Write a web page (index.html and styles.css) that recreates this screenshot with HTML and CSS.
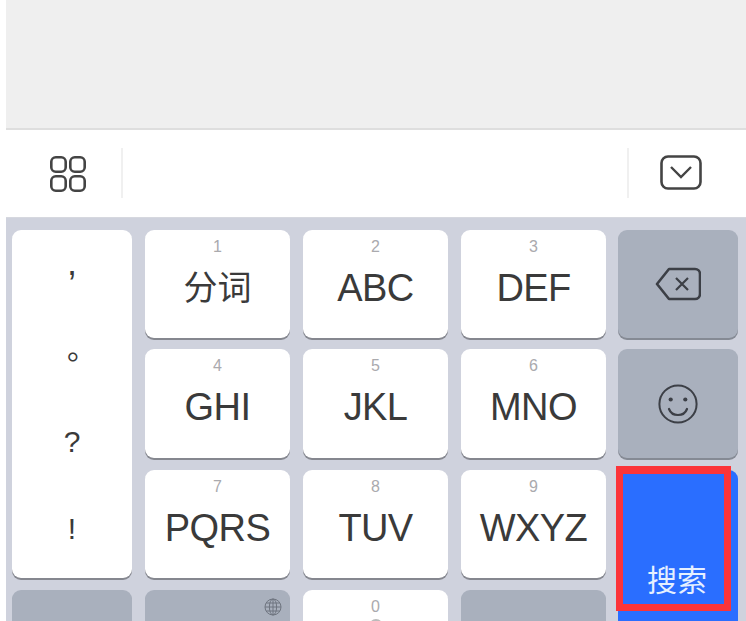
FILE: index.html
```html
<!DOCTYPE html>
<html lang="zh">
<head>
<meta charset="utf-8">
<title>键盘</title>
<link rel="stylesheet" href="styles.css">
</head>
<body>
<main class="screen">
  <div class="blank"></div>
  <div class="toolbar">
    <div class="tool tool-left">
      <svg class="icon" width="38" height="38" viewBox="0 0 38 38" aria-hidden="true">
        <g fill="none" stroke="#444" stroke-width="2.6">
          <rect x="2.3" y="2.3" width="14.4" height="14.4" rx="4.5"/>
          <rect x="21.3" y="2.3" width="14.4" height="14.4" rx="4.5"/>
          <rect x="2.3" y="21.3" width="14.4" height="14.4" rx="4.5"/>
          <rect x="21.3" y="21.3" width="14.4" height="14.4" rx="4.5"/>
        </g>
      </svg>
    </div>
    <div class="divider"></div>
    <div class="tool-fill"></div>
    <div class="divider"></div>
    <div class="tool tool-right">
      <svg class="icon" width="42" height="35" viewBox="0 0 42 35" aria-hidden="true">
        <rect x="1.5" y="1.5" width="39" height="32" rx="6.5" fill="none" stroke="#444" stroke-width="2.6"/>
        <path d="M11 12 L21 22 L31 12" fill="none" stroke="#444" stroke-width="2.4"/>
      </svg>
    </div>
  </div>
  <div class="keyboard">
    <div class="key punct">
      <span class="p-comma">,</span><span class="p-stop">。</span><span class="p-mark">?</span><span class="p-mark">!</span>
    </div>
    <div class="key"><small>1</small><b class="cjk">分词</b></div>
    <div class="key"><small>2</small><b>ABC</b></div>
    <div class="key"><small>3</small><b>DEF</b></div>
    <div class="key dark tail">
      <svg width="46" height="34" viewBox="0 0 46 34" aria-hidden="true">
        <path d="M14 2 H40 A5 5 0 0 1 45 7 V27 A5 5 0 0 1 40 32 H14 L2 17 Z" fill="none" stroke="#3c3f46" stroke-width="2.6" stroke-linejoin="round"/>
        <path d="M21 11 L33 23 M33 11 L21 23" stroke="#3c3f46" stroke-width="2.2" fill="none"/>
      </svg>
    </div>
    <div class="key r2"><small>4</small><b>GHI</b></div>
    <div class="key r2"><small>5</small><b>JKL</b></div>
    <div class="key r2"><small>6</small><b>MNO</b></div>
    <div class="key dark tail r2">
      <svg width="40" height="40" viewBox="0 0 40 40" aria-hidden="true">
        <circle cx="20" cy="20" r="18.6" fill="none" stroke="#3c3f46" stroke-width="2"/>
        <circle cx="12.7" cy="15.5" r="2.1" fill="#3c3f46"/>
        <circle cx="27.3" cy="15.5" r="2.1" fill="#3c3f46"/>
        <path d="M11 25 C14 33 26 33 29 25" fill="none" stroke="#3c3f46" stroke-width="2.2" stroke-linecap="round"/>
      </svg>
    </div>
    <div class="key"><small>7</small><b>PQRS</b></div>
    <div class="key"><small>8</small><b>TUV</b></div>
    <div class="key"><small>9</small><b>WXYZ</b></div>
    <div class="key search tail"><span>搜索</span></div>
    <div class="key dark"></div>
    <div class="key dark globe-key">
      <svg class="globe" width="18" height="18" viewBox="0 0 18 18" aria-hidden="true">
        <g fill="none" stroke="#6f7580" stroke-width="1">
          <circle cx="9" cy="9" r="8"/>
          <ellipse cx="9" cy="9" rx="3.6" ry="8"/>
          <path d="M9 1 V17 M1 9 H17 M2.2 5 H15.8 M2.2 13 H15.8"/>
        </g>
      </svg>
    </div>
    <div class="key"><small>0</small><i class="space"></i></div>
    <div class="key dark"></div>
  </div>
  <div class="highlight"></div>
</main>
</body>
</html>
```

FILE: styles.css
```css
* { box-sizing: border-box; }
html, body { margin: 0; height: 100%; background: #fff; }
body { overflow: hidden; }
.screen {
  position: relative;
  width: 746px;
  height: 621px;
  padding-left: 6px;
  overflow: hidden;
  font-family: "Liberation Sans", "Noto Sans CJK SC", sans-serif;
}
.blank {
  height: 130px;
  background: #efefef;
  border-bottom: 2px solid #dedede;
}
.toolbar {
  display: flex;
  align-items: center;
  height: 87px;
  background: #fff;
}
.tool { display: flex; justify-content: center; align-items: center; }
.tool-left { width: 115px; padding-left: 8px; }
.tool-right { width: 103px; margin-top: -2px; }
.tool-fill { flex: 0 0 504px; }
.divider { width: 2px; height: 50px; background: #f0f0f0; margin-top: -1px; }
.icon { display: block; }
.keyboard {
  display: grid;
  grid-template-columns: 120px 145px 145px 145px 120px;
  grid-auto-rows: 108px;
  column-gap: 13px;
  row-gap: 12px;
  height: 404px;
  padding: 12px 0 0 6px;
  background: #cfd2dd;
  border-top: 1px solid #d6d8df;
}
.key {
  position: relative;
  display: flex;
  flex-direction: column;
  align-items: center;
  background: #fff;
  border-radius: 9px;
  box-shadow: 0 2px 0 #85878f;
  color: #3a3a3a;
}
.r2 { margin-top: -1px; }
.tail { margin-left: -1px; margin-right: 1px; }
.key small {
  margin-top: 8px;
  font-size: 16px;
  line-height: 18px;
  color: #aaaaae;
}
.key b {
  margin-top: 10px;
  font-size: 38px;
  font-weight: 400;
  line-height: 44px;
  letter-spacing: -0.6px;
}
.key b.cjk { font-size: 34px; letter-spacing: 0; }
.punct {
  grid-row: span 3;
  justify-content: flex-start;
  font-size: 30px;
}
.punct span {
  height: 87px;
  display: flex;
  align-items: center;
  justify-content: center;
  width: 100%;
}
.punct .p-comma { padding-bottom: 22px; font-size: 36px; }
.punct .p-stop { padding: 0 0 30px 20px; }
.punct .p-mark { padding-bottom: 12px; }
.dark {
  background: #a9b0bd;
  box-shadow: 0 2px 0 #858a94;
  justify-content: center;
}
.search {
  grid-row: span 2;
  background: #2a6eff;
  box-shadow: none;
  color: #e6f0ff;
}
.search span {
  margin-top: 91px;
  padding-right: 2px;
  font-size: 30px;
  line-height: 40px;
}
.globe { position: absolute; top: 8px; right: 8px; }
.space {
  display: block;
  width: 14px;
  height: 14px;
  margin-top: 3px;
  border: 2px solid #bbb;
  border-radius: 50%;
}
.highlight {
  position: absolute;
  left: 616px;
  top: 466px;
  width: 115px;
  height: 145px;
  border: 7px solid #fb3439;
  border-top-width: 8px;
}
```
